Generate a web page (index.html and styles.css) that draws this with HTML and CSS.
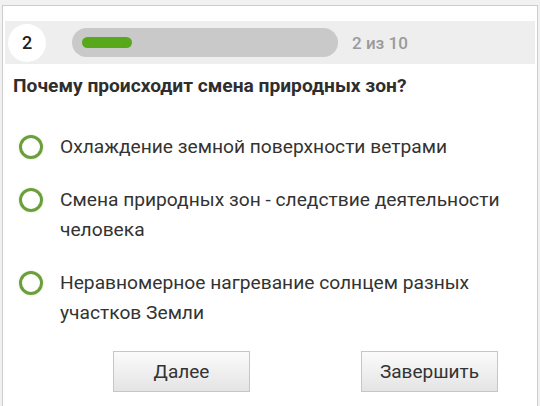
FILE: index.html
```html
<!DOCTYPE html>
<html lang="ru">

<head>
    <meta charset="UTF-8">
    <meta name="viewport" content="width=device-width, initial-scale=1.0">
    <title>Тест</title>
    <link rel="stylesheet" href="styles.css">
</head>

<body>
    <div class="page">
        <div class="status">
            <div class="number">2</div>
            <div class="track">
                <div class="fill"></div>
            </div>
            <span class="counter">2 из 10</span>
        </div>

        <h2 class="question">Почему происходит смена природных зон?</h2>

        <ul class="answers">
            <li class="answer"><span class="radio"></span><span class="label">Охлаждение земной поверхности ветрами</span></li>
            <li class="answer"><span class="radio"></span><span class="label">Смена природных зон - следствие деятельности человека</span></li>
            <li class="answer"><span class="radio"></span><span class="label">Неравномерное нагревание солнцем разных участков Земли</span></li>
        </ul>

        <div class="buttons">
            <button class="btn">Далее</button>
            <button class="btn">Завершить</button>
        </div>
    </div>
</body>

</html>
```

FILE: styles.css
```css
body {
    margin: 0;
    padding: 0;
    background: #f1f1f1;
    font-family: Roboto, "Liberation Sans", sans-serif;
    color: #333;
}

.page {
    margin: 5px 2px 0 2px;
    background: #fff;
    border: 1px solid #cdcdcd;
    border-bottom: none;
    height: 401px;
    box-sizing: border-box;
}

.status {
    display: flex;
    align-items: center;
    margin: 15px 2px 0 2px;
    height: 43px;
    padding-left: 3px;
    background: #eeeeee;
}

.number {
    width: 38px;
    height: 38px;
    border-radius: 50%;
    background: #fff;
    display: flex;
    align-items: center;
    justify-content: center;
    font-size: 18px;
    font-weight: 500;
    color: #222;
}

.track {
    width: 266px;
    height: 29px;
    margin-left: 26px;
    border-radius: 15px;
    background: #c9c9c9;
    display: flex;
    align-items: center;
}

.fill {
    width: 50px;
    height: 11px;
    margin-left: 10px;
    border-radius: 6px;
    background: #58a81c;
}

.counter {
    margin-left: 14px;
    font-size: 17px;
    font-weight: 500;
    color: #9a9a9a;
}

.question {
    margin: 11px 0 0 10px;
    font-size: 19.2px;
    font-weight: 700;
    line-height: 22px;
    color: #2e2e2e;
}

.answers {
    list-style: none;
    margin: 35px 0 0 0;
    padding: 0;
}

.answer {
    display: flex;
    align-items: flex-start;
    margin-bottom: 23px;
}

.radio {
    flex: none;
    width: 18px;
    height: 18px;
    margin: 3px 0 0 16px;
    border: 3px solid #6c9f3c;
    border-radius: 50%;
    box-shadow: 0 0 2px #c8e6a8;
}

.label {
    margin-left: 17px;
    padding-right: 20px;
    font-size: 19.2px;
    line-height: 30px;
    color: #333;
}

.buttons {
    display: flex;
    gap: 111px;
    padding-left: 110px;
    margin-top: 22px;
}

.btn {
    width: 137px;
    height: 41px;
    border: 1px solid #c6c6c6;
    border-radius: 0;
    background: linear-gradient(#fbfbfb, #e4e4e4);
    font-family: Roboto, "Liberation Sans", sans-serif;
    font-size: 19px;
    color: #333;
}
```
